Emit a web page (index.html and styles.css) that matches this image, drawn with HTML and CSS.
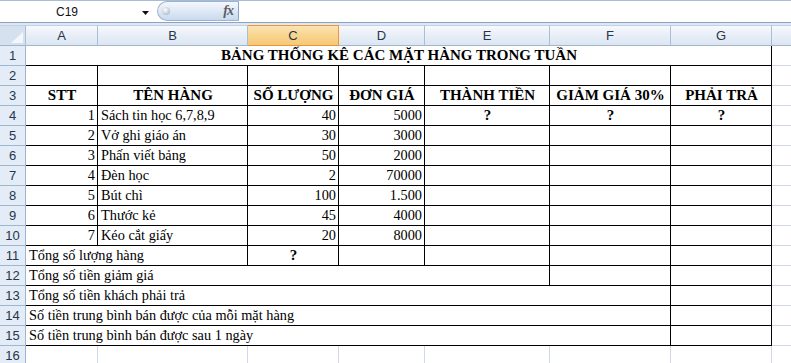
FILE: index.html
```html
<!DOCTYPE html>
<html lang="vi">
<head>
  <meta charset="UTF-8">
  <title>Bảng thống kê các mặt hàng</title>
  <link rel="stylesheet" href="styles.css">
</head>
<body>
  <div class="formula-bar">
    <div class="name-box">
      <span class="cell-ref">C19</span>
      <svg class="dropdown" width="7" height="4" viewBox="0 0 7 4"><path d="M0 0h7L3.5 4z" fill="#111"/></svg>
    </div>
    <div class="fx-button">
      <span class="knob"></span>
      <span class="fx">fx</span>
    </div>
    <div class="formula-input"></div>
  </div>
  <div class="bar-gap"></div>

  <table class="sheet">
    <colgroup>
      <col class="w-rh"><col class="w-a"><col class="w-b"><col class="w-c">
      <col class="w-d"><col class="w-e"><col class="w-f"><col class="w-g"><col class="w-h">
    </colgroup>
    <thead>
      <tr class="col-heads">
        <th class="corner"><svg width="12" height="11" viewBox="0 0 12 11"><path d="M12 0V11H0z" fill="#f3f6fa"/></svg></th>
        <th>A</th><th>B</th><th class="sel">C</th><th>D</th><th>E</th><th>F</th><th>G</th><th></th>
      </tr>
    </thead>
    <tbody>
      <tr><th>1</th><td colspan="7" class="bx bold center">BẢNG THỐNG KÊ CÁC MẶT HÀNG TRONG TUẦN</td><td></td></tr>
      <tr><th>2</th><td class="bx"></td><td class="bx"></td><td class="bx"></td><td class="bx"></td><td class="bx"></td><td class="bx"></td><td class="bx"></td><td></td></tr>
      <tr><th>3</th>
        <td class="bx bold center">STT</td>
        <td class="bx bold center">TÊN HÀNG</td>
        <td class="bx bold center">SỐ LƯỢNG</td>
        <td class="bx bold center">ĐƠN GIÁ</td>
        <td class="bx bold center">THÀNH TIỀN</td>
        <td class="bx bold center">GIẢM GIÁ 30%</td>
        <td class="bx bold center">PHẢI TRẢ</td>
        <td></td>
      </tr>
      <tr><th>4</th><td class="bx num">1</td><td class="bx">Sách tin học 6,7,8,9</td><td class="bx num">40</td><td class="bx num">5000</td><td class="bx bold center">?</td><td class="bx bold center">?</td><td class="bx bold center">?</td><td></td></tr>
      <tr><th>5</th><td class="bx num">2</td><td class="bx">Vở ghi giáo án</td><td class="bx num">30</td><td class="bx num">3000</td><td class="bx"></td><td class="bx"></td><td class="bx"></td><td></td></tr>
      <tr><th>6</th><td class="bx num">3</td><td class="bx">Phấn viết bảng</td><td class="bx num">50</td><td class="bx num">2000</td><td class="bx"></td><td class="bx"></td><td class="bx"></td><td></td></tr>
      <tr><th>7</th><td class="bx num">4</td><td class="bx">Đèn học</td><td class="bx num">2</td><td class="bx num">70000</td><td class="bx"></td><td class="bx"></td><td class="bx"></td><td></td></tr>
      <tr><th>8</th><td class="bx num">5</td><td class="bx">Bút chì</td><td class="bx num">100</td><td class="bx num">1.500</td><td class="bx"></td><td class="bx"></td><td class="bx"></td><td></td></tr>
      <tr><th>9</th><td class="bx num">6</td><td class="bx">Thước kẻ</td><td class="bx num">45</td><td class="bx num">4000</td><td class="bx"></td><td class="bx"></td><td class="bx"></td><td></td></tr>
      <tr><th>10</th><td class="bx num">7</td><td class="bx">Kéo cắt giấy</td><td class="bx num">20</td><td class="bx num">8000</td><td class="bx"></td><td class="bx"></td><td class="bx"></td><td></td></tr>
      <tr><th>11</th><td colspan="2" class="bx">Tổng số lượng hàng</td><td class="bx bold center">?</td><td class="bx"></td><td class="bx"></td><td class="bx"></td><td class="bx"></td><td></td></tr>
      <tr><th>12</th><td colspan="5" class="bx">Tổng số tiền giảm giá</td><td class="bx"></td><td class="bx"></td><td></td></tr>
      <tr><th>13</th><td colspan="6" class="bx">Tổng số tiền khách phải trả</td><td class="bx"></td><td></td></tr>
      <tr><th>14</th><td colspan="6" class="bx">Số tiền trung bình bán được của mỗi mặt hàng</td><td class="bx"></td><td></td></tr>
      <tr><th>15</th><td colspan="6" class="bx">Số tiền trung bình bán được sau 1 ngày</td><td class="bx"></td><td></td></tr>
      <tr><th>16</th><td></td><td></td><td></td><td></td><td></td><td></td><td></td><td></td></tr>
    </tbody>
  </table>
</body>
</html>
```

FILE: styles.css
```css
html, body {
  margin: 0;
  width: 791px;
  height: 363px;
  overflow: hidden;
  background: #fff;
}
body {
  font-family: 'Liberation Sans', Arial, sans-serif;
}

/* formula bar */
.formula-bar {
  display: flex;
  height: 21px;
  border-top: 1px solid #a7bcd6;
  border-bottom: 1px solid #8aa4c5;
  background: #fff;
}
.name-box {
  width: 155px;
  display: flex;
  align-items: center;
}
.cell-ref {
  width: 134px;
  text-align: center;
  font-size: 12px;
  color: #111;
}
.dropdown {
  margin-left: 8px;
  margin-top: 2px;
}
.fx-button {
  width: 82px;
  height: 20px;
  box-sizing: border-box;
  margin-left: 2px;
  border: 1px solid #9db3cf;
  border-right-color: #8aa4c5;
  border-radius: 11px 0 0 11px;
  background: linear-gradient(#f4f8fd, #dce7f5 55%, #c9d9ee);
  display: flex;
  align-items: center;
  justify-content: space-between;
  padding: 0 5px 0 4px;
}
.knob {
  width: 8px;
  height: 8px;
  border-radius: 50%;
  background: radial-gradient(circle at 40% 35%, #ffffff, #b9c3cf 70%, #8e9aa8);
}
.fx {
  font-family: 'Liberation Serif', 'Times New Roman', serif;
  font-style: italic;
  font-weight: bold;
  font-size: 14px;
  color: #5a5f66;
  letter-spacing: -1px;
}
.formula-input {
  flex: 1;
}
.bar-gap {
  height: 2px;
  background: #dfe7f2;
}

/* sheet grid */
.sheet {
  border-collapse: separate;
  border-spacing: 0;
  table-layout: fixed;
  width: 792px;
}
.w-rh { width: 26px; }
.w-a { width: 72px; }
.w-b { width: 150px; }
.w-c { width: 91px; }
.w-d { width: 86px; }
.w-e { width: 125px; }
.w-f { width: 121px; }
.w-g { width: 101px; }
.w-h { width: 20px; }

.sheet tr { height: 20px; }
.sheet .col-heads { height: 21px; }

.col-heads th {
  border-top: 1px solid #c3d1e3;
  border-right: 1px solid #a9bfd6;
  border-bottom: 1px solid #9eb6ce;
  background: linear-gradient(#f6f9fd, #e8eef7 50%, #dce5f1);
  font-weight: normal;
  font-size: 13px;
  color: #27364a;
  padding: 0;
  text-align: center;
  vertical-align: middle;
}
.col-heads th.sel {
  background: linear-gradient(#fbe3b3, #f8d58f 50%, #f5c878);
  border-color: #f29436;
  border-top-color: #f29436;
}
.col-heads th.corner {
  background: #d5e1ef;
  text-align: right;
  vertical-align: bottom;
  padding: 0 2px 2px 0;
  line-height: 0;
}

tbody th {
  background: #e4ecf7;
  border-right: 1px solid #9eb6ce;
  border-bottom: 1px solid #9eb6ce;
  font-weight: normal;
  font-size: 13px;
  color: #27364a;
  padding: 0;
  text-align: center;
  vertical-align: middle;
}

td {
  border-right: 1px solid #d0d7e5;
  border-bottom: 1px solid #d0d7e5;
  padding: 0 2px 2px 3px;
  font-family: 'Liberation Serif', 'Times New Roman', serif;
  font-size: 14.3px;
  line-height: 16px;
  color: #000;
  vertical-align: bottom;
  white-space: nowrap;
  overflow: hidden;
}
td.bx {
  border-right-color: #000;
  border-bottom-color: #000;
}
td.bold {
  font-weight: bold;
  font-size: 15px;
}
td.center { text-align: center; }
td.num { text-align: right; }
```
